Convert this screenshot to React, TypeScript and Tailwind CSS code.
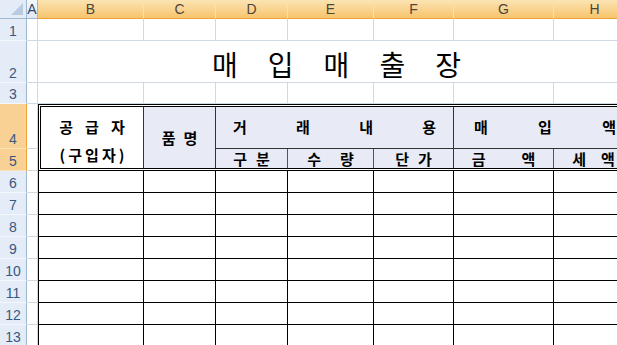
import React from "react";

const KR = "font-['Noto_Sans_CJK_KR','Noto_Sans',sans-serif]";
const GRID = "border-r border-b border-[#d0d7e5] bg-white";
const DATA = "border-r border-b border-black bg-white";
const ROWHDR = "flex items-end justify-center pb-[2px] border-r border-b text-[14px] leading-none font-['Liberation_Sans',Arial,sans-serif]";

function Spaced({ text, className }: { text: string; className: string }) {
  return (
    <div className={"flex leading-none " + className}>
      {text.split("").map((c, i) => (
        <span key={i}>{c}</span>
      ))}
    </div>
  );
}

const App = () => {
  const letters = ["B", "C", "D", "E", "F", "G", "H"];
  const dataRows = [6, 7, 8, 9, 10, 11, 12, 13];

  return (
    <div className="w-[617px] h-[345px] overflow-hidden bg-white">
      <div className="grid w-[636px] grid-cols-[27px_11px_106px_72px_72px_86px_80px_100px_82px] grid-rows-[19px_22px_42px_21px_45px_22px_repeat(8,22px)]">
        {/* corner */}
        <div className="relative bg-[#e4ecf7] border-r border-b border-[#9eb6ce]">
          <div className="absolute right-[3px] bottom-[3px] w-0 h-0 border-l-[12px] border-l-transparent border-b-[12px] border-b-[#b9cbe1]" />
        </div>
        {/* column headers */}
        <div className="flex items-center justify-center bg-gradient-to-b from-[#f4f8fc] to-[#dfe8f4] border-r border-b border-[#9eb6ce] text-[14px] leading-none text-[#2d4a6d] font-['Liberation_Sans',Arial,sans-serif]">
          A
        </div>
        {letters.map((l) => (
          <div
            key={l}
            className="flex items-center justify-center bg-gradient-to-b from-[#fbe4b3] to-[#f7c46b] border-r border-r-[#fbe0a8] border-b border-b-[#f1a13a] text-[14px] leading-none text-[#4f4638] font-['Liberation_Sans',Arial,sans-serif]"
          >
            {l}
          </div>
        ))}

        {/* row 1 */}
        <div className={ROWHDR + " bg-[#e4ecf7] border-r-[#9eb6ce] border-b-[#f4f7fb] text-[#3a5780]"}>1</div>
        <div className={GRID} />
        {letters.map((l) => (
          <div key={l} className={GRID} />
        ))}

        {/* row 2 - title */}
        <div className={ROWHDR + " bg-[#e4ecf7] border-r-[#9eb6ce] border-b-[#f4f7fb] text-[#3a5780]"}>2</div>
        <div className={GRID} />
        <div className={"col-span-7 flex items-end justify-center pb-[4px] " + GRID}>
          <Spaced text="매입매출장" className={KR + " gap-[30px] text-[28px] text-black"} />
        </div>

        {/* row 3 */}
        <div className={ROWHDR + " bg-[#e4ecf7] border-r-[#9eb6ce] border-b-[#f4f7fb] text-[#3a5780]"}>3</div>
        <div className={GRID} />
        {letters.map((l) => (
          <div key={l} className={GRID} />
        ))}

        {/* rows 4-5 header block */}
        <div className={ROWHDR + " bg-[#f9d194] border-r-[#f1a13a] border-b-[#fbe3b5] text-[#3a5780]"}>4</div>
        <div className={GRID} />
        <div className="col-span-7 row-span-2 border-[3px] border-double border-black bg-white">
          <div className={"grid h-full grid-cols-[103px_72px_72px_86px_80px_100px_79px] grid-rows-[42px_19px] text-black font-bold text-[15px] " + KR}>
            <div className="row-span-2 flex flex-col items-center pt-[12px] gap-[13px] border-r border-[#333] bg-white">
              <Spaced text="공급자" className="gap-[12px]" />
              <Spaced text="(구입자)" className="gap-[3px]" />
            </div>
            <div className="row-span-2 flex items-center justify-center border-r border-[#333] bg-[#e8ebf6]">
              <Spaced text="품명" className="gap-[8px]" />
            </div>
            <div className="col-span-3 flex items-center justify-between px-[17px] border-r border-b border-[#333] bg-[#e8ebf6]">
              <span>거</span>
              <span>래</span>
              <span>내</span>
              <span>용</span>
            </div>
            <div className="col-span-2 flex items-center justify-between pl-[20px] pr-[17px] border-b border-[#333] bg-[#e8ebf6]">
              <span>매</span>
              <span>입</span>
              <span>액</span>
            </div>
            <div className="flex items-end justify-center pb-[2px] border-r border-[#555] bg-[#e8ebf6]">
              <Spaced text="구분" className="gap-[9px]" />
            </div>
            <div className="flex items-end justify-center pb-[2px] border-r border-[#555] bg-[#e8ebf6]">
              <Spaced text="수량" className="gap-[19px]" />
            </div>
            <div className="flex items-end justify-center pb-[2px] border-r border-[#333] bg-[#e8ebf6]">
              <Spaced text="단가" className="gap-[9px]" />
            </div>
            <div className="flex items-end justify-center pb-[2px] border-r border-[#555] bg-[#e8ebf6]">
              <Spaced text="금액" className="gap-[36px]" />
            </div>
            <div className="flex items-end justify-center pb-[2px] bg-[#e8ebf6]">
              <Spaced text="세액" className="gap-[15px]" />
            </div>
          </div>
        </div>
        <div className={ROWHDR + " bg-[#f9d194] border-r-[#f1a13a] border-b-[#fbe3b5] text-[#3a5780]"}>5</div>
        <div className={GRID} />

        {/* data rows */}
        {dataRows.map((r) => (
          <React.Fragment key={r}>
            <div className={ROWHDR + " bg-[#e4ecf7] border-r-[#9eb6ce] border-b-[#f4f7fb] text-[#3a5780]"}>{r}</div>
            <div className={GRID} />
            <div className={DATA + " border-l"} />
            <div className={DATA} />
            <div className={DATA} />
            <div className={DATA} />
            <div className={DATA} />
            <div className={DATA} />
            <div className={DATA} />
          </React.Fragment>
        ))}
      </div>
    </div>
  );
};

export default App;
